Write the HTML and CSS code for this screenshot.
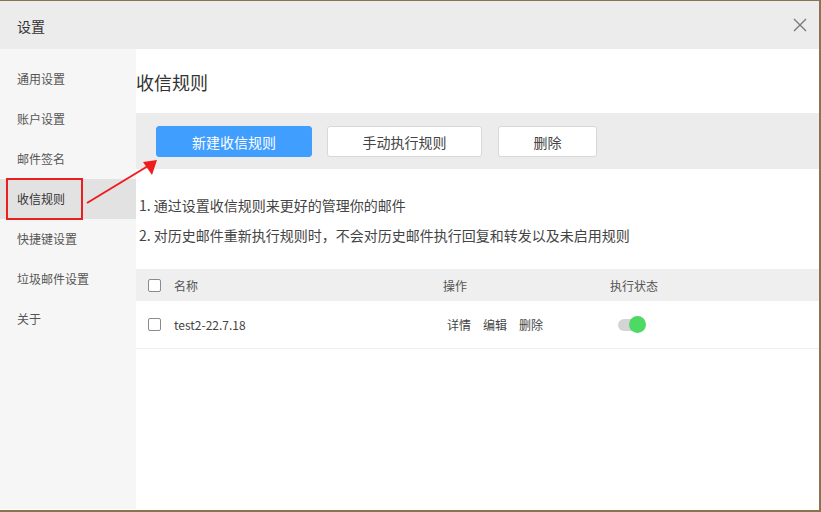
FILE: index.html
```html
<!DOCTYPE html>
<html lang="zh-CN">
<head>
<meta charset="utf-8">
<title>设置</title>
<link rel="stylesheet" href="styles.css">
</head>
<body>
<div class="window">
  <div class="titlebar">
    <span class="title">设置</span>
    <svg class="close" width="14" height="14" viewBox="0 0 14 14"><path d="M1 1L13 13M13 1L1 13" stroke="#7a7a7a" stroke-width="1.4" fill="none"/></svg>
  </div>
  <div class="body">
    <nav class="sidebar">
      <div class="nav-item">通用设置</div>
      <div class="nav-item">账户设置</div>
      <div class="nav-item">邮件签名</div>
      <div class="nav-item active">收信规则</div>
      <div class="nav-item">快捷键设置</div>
      <div class="nav-item">垃圾邮件设置</div>
      <div class="nav-item">关于</div>
    </nav>
    <main class="main">
      <h1 class="heading">收信规则</h1>
      <div class="toolbar">
        <button class="btn primary new">新建收信规则</button>
        <button class="btn run">手动执行规则</button>
        <button class="btn del">删除</button>
      </div>
      <div class="tips">
        <p>1. 通过设置收信规则来更好的管理你的邮件</p>
        <p>2. 对历史邮件重新执行规则时，不会对历史邮件执行回复和转发以及未启用规则</p>
      </div>
      <div class="table">
        <div class="tr thead">
          <span class="cb"></span>
          <span class="c-name">名称</span>
          <span class="c-ops">操作</span>
          <span class="c-status">执行状态</span>
        </div>
        <div class="tr row">
          <span class="cb"></span>
          <span class="c-name">test2-22.7.18</span>
          <span class="c-ops ops"><a>详情</a><a>编辑</a><a>删除</a></span>
          <span class="c-status"><span class="toggle"><span class="knob"></span></span></span>
        </div>
      </div>
    </main>
  </div>
  <div class="annot-box"></div>
  <svg class="annot-arrow" width="821" height="512" viewBox="0 0 821 512">
    <line x1="87" y1="203" x2="148" y2="166" stroke="#ee1c1c" stroke-width="2"/>
    <polygon points="157,160 143,162 152,175" fill="#ee1c1c"/>
  </svg>
</div>
</body>
</html>
```
FILE: styles.css
```css
* { box-sizing: border-box; }
html, body { margin: 0; padding: 0; }
body {
  width: 821px;
  height: 512px;
  background: #8a7350;
  font-family: "Noto Sans CJK SC", "Noto Sans", sans-serif;
  overflow: hidden;
}
.window {
  position: relative;
  margin-top: 1px;
  width: 819px;
  height: 509px;
  background: #fff;
  display: flex;
  flex-direction: column;
}
.titlebar {
  height: 48px;
  background: #ececec;
  display: flex;
  align-items: center;
  justify-content: space-between;
  padding: 0 12px 0 17px;
}
.title { font-size: 14px; color: #333; line-height: 20px; margin-top: 2px; }
.close { margin-top: -1px; }
.body { flex: 1; display: flex; min-height: 0; }
.sidebar {
  width: 136px;
  background: #f6f6f6;
  padding-top: 10px;
  margin-bottom: 1px;
}
.nav-item {
  height: 40px;
  line-height: 40px;
  padding-left: 17px;
  font-size: 12px;
  color: #555;
}
.nav-item.active { background: #e2e2e2; color: #333; }
.main { flex: 1; display: flex; flex-direction: column; }
.heading {
  margin: 0;
  padding: 20px 0 18px 0;
  font-size: 18px;
  line-height: 26px;
  font-weight: normal;
  color: #333;
}
.toolbar {
  height: 56px;
  background: #ececec;
  padding: 13px 20px;
  display: flex;
  gap: 15px;
}
.btn {
  height: 31px;
  border: 1px solid #d8d8d8;
  border-radius: 3px;
  background: #fff;
  font-family: inherit;
  font-size: 14px;
  color: #444;
  padding: 0;
}
.btn.primary { background: #409eff; border-color: #409eff; color: #fff; }
.new { width: 156px; }
.run { width: 155px; margin-right: 1px; }
.del { width: 99px; }
.tips { padding: 21px 0 19px 3px; }
.tips p { margin: 0; font-size: 14px; line-height: 30px; color: #444; }
.table { display: flex; flex-direction: column; }
.tr {
  display: grid;
  grid-template-columns: 13px 282px 167px 1fr;
  align-items: center;
  padding-left: 12px;
  font-size: 12px;
}
.thead { height: 32px; background: #efefef; color: #555; }
.row { height: 48px; border-bottom: 1px solid #eeeeee; color: #444; }
.cb {
  width: 13px;
  height: 13px;
  border: 1px solid #8a8a8a;
  border-radius: 2px;
  background: #fff;
}
.c-name { padding-left: 13px; }
.ops { padding-left: 4px; display: flex; gap: 12px; }
.ops a { color: #444; }
.row .c-status { padding-left: 8px; display: flex; }
.toggle {
  position: relative;
  width: 26px;
  height: 12px;
  border-radius: 6px;
  background: #d4d4d4;
  margin-top: 1px;
}
.knob {
  position: absolute;
  right: -2px;
  top: -3px;
  width: 17px;
  height: 17px;
  border-radius: 50%;
  background: #4cd964;
}
.annot-box {
  position: absolute;
  left: 6px;
  top: 177px;
  width: 77px;
  height: 42px;
  border: 2px solid #e8201f;
}
.annot-arrow { position: absolute; left: 0; top: -1px; pointer-events: none; }
```
